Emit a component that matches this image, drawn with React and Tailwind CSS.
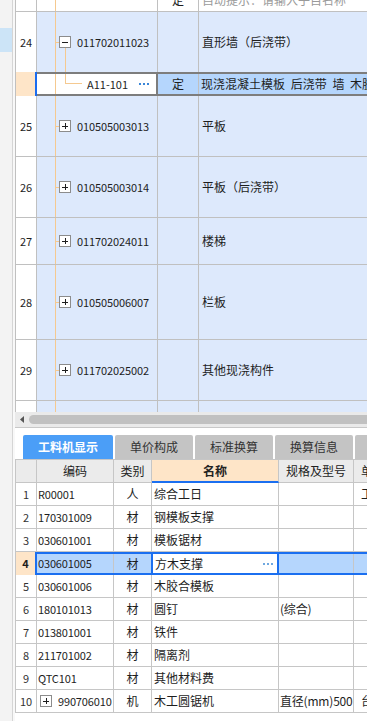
const topRows = [
  { n: '24', h: 'h-[60px]', code: '011702011023', name: '直形墙（后浇带）', open: true, noBorder: true },
  { sub: true },
  { n: '25', h: 'h-[61px]', code: '010505003013', name: '平板' },
  { n: '26', h: 'h-[61px]', code: '010505003014', name: '平板（后浇带）' },
  { n: '27', h: 'h-[47px]', code: '011702024011', name: '楼梯' },
  { n: '28', h: 'h-[75px]', code: '010505006007', name: '栏板' },
  { n: '29', h: 'h-[61px]', code: '011702025002', name: '其他现浇构件' },
  { n: '', h: 'h-[20px]', code: '', name: '' },
];

const parts = [
  ['1', 'R00001', '人', '综合工日', '', '工'],
  ['2', '170301009', '材', '钢模板支撑', '', ''],
  ['3', '030601001', '材', '模板锯材', '', ''],
  ['4', '030601005', '材', '方木支撑', '', '', true],
  ['5', '030601006', '材', '木胶合模板', '', ''],
  ['6', '180101013', '材', '圆钉', '(综合)', ''],
  ['7', '013801001', '材', '铁件', '', ''],
  ['8', '211701002', '材', '隔离剂', '', ''],
  ['9', 'QTC101', '材', '其他材料费', '', ''],
  ['10', '990706010', '机', '木工圆锯机', '直径(mm)500', '台', false, true],
];

function ExpandBox({ minus }) {
  return (
    <svg width="12" height="12" viewBox="0 0 12 12" className="block shrink-0" shapeRendering="crispEdges">
      <rect x="0.5" y="0.5" width="11" height="11" fill="#fff" stroke="#8c8c8c" />
      <path d="M3 6h6" stroke="#1f1f1f" />
      {!minus && <path d="M6 3v6" stroke="#1f1f1f" />}
    </svg>
  );
}

function Dots({ color }) {
  return (
    <span className="flex gap-[2px]">
      <span className={`h-[2px] w-[2px] ${color}`} />
      <span className={`h-[2px] w-[2px] ${color}`} />
      <span className={`h-[2px] w-[2px] ${color}`} />
    </span>
  );
}

function TopRow({ n, h, code, name, open, noBorder, head }) {
  const bg = head ? 'bg-white' : 'bg-[#dde9fc]';
  return (
    <div className={`flex ${h} ${noBorder ? '' : 'border-b'} border-[#c0c0c0]`}>
      <div className="flex w-[21px] shrink-0 items-center justify-center border-r border-[#c0c0c0] bg-white text-[11px]">
        {n}
      </div>
      <div className={`flex w-[121px] shrink-0 border-r border-[#c0c0c0] ${bg}`}>
        <div className="ml-[18px] flex flex-1 items-center border-l border-[#f5c990]">
          {code && (
            <>
              <span className="h-px w-[3px] bg-[#f5c990]" />
              <span className="relative flex">
                <ExpandBox minus={open} />
                {open && <span className="absolute left-[6px] top-[12px] h-[24px] w-px bg-[#f5c990]" />}
              </span>
              <span className="ml-[6px] text-[11px] tracking-[-0.1px]">{code}</span>
            </>
          )}
        </div>
      </div>
      <div className={`flex w-[41px] shrink-0 items-center justify-center border-r border-[#c0c0c0] text-[12px] ${bg}`}>
        {head ? '定' : ''}
      </div>
      <div className={`flex min-w-0 flex-1 items-center overflow-hidden whitespace-nowrap pl-[3px] text-[12px] ${bg} ${head ? 'text-[#9a9a9a]' : ''}`}>
        {head ? '自动提示：请输入子目名称' : name}
      </div>
    </div>
  );
}

function SubRow() {
  return (
    <div className="flex h-[24px]">
      <div className="w-[19px] shrink-0 bg-[#fee5c8]" />
      <div className="w-[2px] shrink-0 bg-[#1a6cf0]" />
      <div className="flex min-w-0 flex-1 border-y-2 border-[#7d7d7d]">
        <div className="flex w-[121px] shrink-0 border-r-2 border-[#7d7d7d] bg-white">
          <div className="ml-[18px] flex flex-1 items-center border-l border-[#f5c990]">
            <div className="ml-[9px] flex w-[17px] flex-col self-stretch">
              <div className="h-1/2 border-b border-l border-[#f5c990]" />
            </div>
            <span className="ml-[5px] text-[11px]">A11-101</span>
            <span className="ml-[11px]">
              <Dots color="bg-[#3a86d8]" />
            </span>
          </div>
        </div>
        <div className="flex w-[41px] shrink-0 items-center justify-center border-r border-[#c0c0c0] bg-[#b5d6fd] text-[12px]">
          定
        </div>
        <div className="flex min-w-0 flex-1 items-center overflow-hidden whitespace-nowrap bg-[#b5d6fd] pl-[2px] text-[12px] [word-spacing:3px]">
          现浇混凝土模板 后浇带 墙 木胶合板
        </div>
      </div>
    </div>
  );
}

function PartRow({ r }) {
  const [n, code, kind, name, spec, unit, , hasBox] = r;
  return (
    <div className="flex h-[23px] border-b border-[#c6c6c6] text-[12px]">
      <div className="flex w-[21px] shrink-0 items-center justify-center border-r border-[#c6c6c6] text-[11px] text-[#333]">
        {n}
      </div>
      <div className={`flex w-[77px] shrink-0 items-center overflow-hidden whitespace-nowrap border-r border-[#c6c6c6] text-[11px] tracking-[-0.15px] ${hasBox ? 'pl-[3px]' : 'pl-[1px]'}`}>
        {hasBox && (
          <span className="mr-[6px]">
            <ExpandBox />
          </span>
        )}
        {code}
      </div>
      <div className="flex w-[38px] shrink-0 items-center justify-center border-r border-[#c6c6c6]">{kind}</div>
      <div className="flex w-[127px] shrink-0 items-center border-r border-[#c6c6c6] pl-[2px]">{name}</div>
      <div className="flex w-[75px] shrink-0 items-center overflow-hidden whitespace-nowrap border-r border-[#c6c6c6] pl-[1px] tracking-[-0.2px]">
        {spec}
      </div>
      <div className="flex min-w-0 flex-1 items-center whitespace-nowrap pl-[7px]">{unit}</div>
    </div>
  );
}

function SelectedPartRow({ r }) {
  const [n, code, kind, name] = r;
  return (
    <div className="flex h-[23px] text-[12px]">
      <div className="flex w-[19px] shrink-0 items-center justify-center bg-[#fee5c8] text-[11px] font-bold">{n}</div>
      <div className="w-[2px] shrink-0 bg-[#1b6ff0]" />
      <div className="flex min-w-0 flex-1 border-y-2 border-[#1b6ff0] bg-[#b5d6fd]">
        <div className="flex w-[77px] shrink-0 items-center border-r border-[#c6c6c6] pl-[1px] text-[11px] tracking-[-0.15px]">{code}</div>
        <div className="flex w-[37px] shrink-0 items-center justify-center">{kind}</div>
        <div className="flex w-[128px] shrink-0 items-center justify-between border-x-2 border-[#1b6ff0] bg-white pl-[2px] pr-[4px]">
          {name}
          <Dots color="bg-[#6fa8e0]" />
        </div>
        <div className="w-[75px] shrink-0 border-r border-[#c6c6c6]" />
        <div className="flex-1" />
      </div>
    </div>
  );
}

export default function App() {
  return (
    <div className="flex h-[721px] w-[367px] overflow-hidden bg-white font-['Noto_Sans_CJK_SC',sans-serif] text-[#1e1e1e]">
      <div className="flex w-[15px] shrink-0">
        <div className="flex w-[12px] flex-col bg-[#f3f3f3]">
          <div className="h-[28px]" />
          <div className="h-[24px] bg-[#cce4f7]" />
        </div>
        <div className="w-px bg-[#d5d5d5]" />
        <div className="w-[2px] bg-[#f8f8f8]" />
      </div>

      <div className="flex min-w-0 flex-1 flex-col">
        <div className="h-[412px] shrink-0 overflow-hidden border-l border-[#c0c0c0]">
          <div className="-mt-[11px]">
            <TopRow head h="h-[23px]" n="" code="" name="" />
            {topRows.map((row, i) => (row.sub ? <SubRow key={i} /> : <TopRow key={i} {...row} />))}
          </div>
        </div>

        <div className="flex h-[15px] shrink-0 items-center bg-[#eaeaea]">
          <svg width="4" height="7" viewBox="0 0 4 7" className="ml-[5px] shrink-0">
            <polygon points="4,0 0,3.5 4,7" fill="#555" />
          </svg>
          <div className="ml-[5px] h-[9px] flex-1 rounded-l-full bg-[#c1c1c1]" />
        </div>
        <div className="h-px shrink-0 bg-[#c8c8c8]" />
        <div className="h-[7px] shrink-0" />

        <div className="flex h-[24px] shrink-0 gap-[2px] pl-[8px] text-[12px]">
          <div className="flex w-[90px] shrink-0 items-center justify-center rounded-t-[2px] bg-[#4b9ef7] font-bold text-white">
            工料机显示
          </div>
          {['单价构成', '标准换算', '换算信息', ''].map((t, i) => (
            <div
              key={i}
              className="flex w-[78px] shrink-0 items-center justify-center rounded-t-[2px] bg-[#c4c4c4] text-[#333]"
            >
              {t}
            </div>
          ))}
        </div>

        <div className="border-l border-[#c6c6c6]">
          <div className="flex h-[24px] border-t border-[#c6c6c6] bg-[#ebebeb] text-[12px] text-[#222]">
            <div className="w-[21px] shrink-0 border-b border-r border-[#c6c6c6]" />
            <div className="flex w-[77px] shrink-0 items-center justify-center border-b border-r border-[#c6c6c6]">编码</div>
            <div className="flex w-[38px] shrink-0 items-center justify-center border-b border-r border-[#c6c6c6]">类别</div>
            <div className="flex w-[127px] shrink-0 items-center justify-center border-b-2 border-r border-[#c6c6c6] border-b-[#1b6ff0] bg-[#fee5c8] font-bold">
              名称
            </div>
            <div className="flex w-[75px] shrink-0 items-center justify-center border-b border-r border-[#c6c6c6]">规格及型号</div>
            <div className="flex min-w-0 flex-1 items-center border-b border-[#c6c6c6] pl-[7px]">单</div>
          </div>
          {parts.map((r) => (r[6] ? <SelectedPartRow key={r[0]} r={r} /> : <PartRow key={r[0]} r={r} />))}
        </div>
      </div>
    </div>
  );
}
